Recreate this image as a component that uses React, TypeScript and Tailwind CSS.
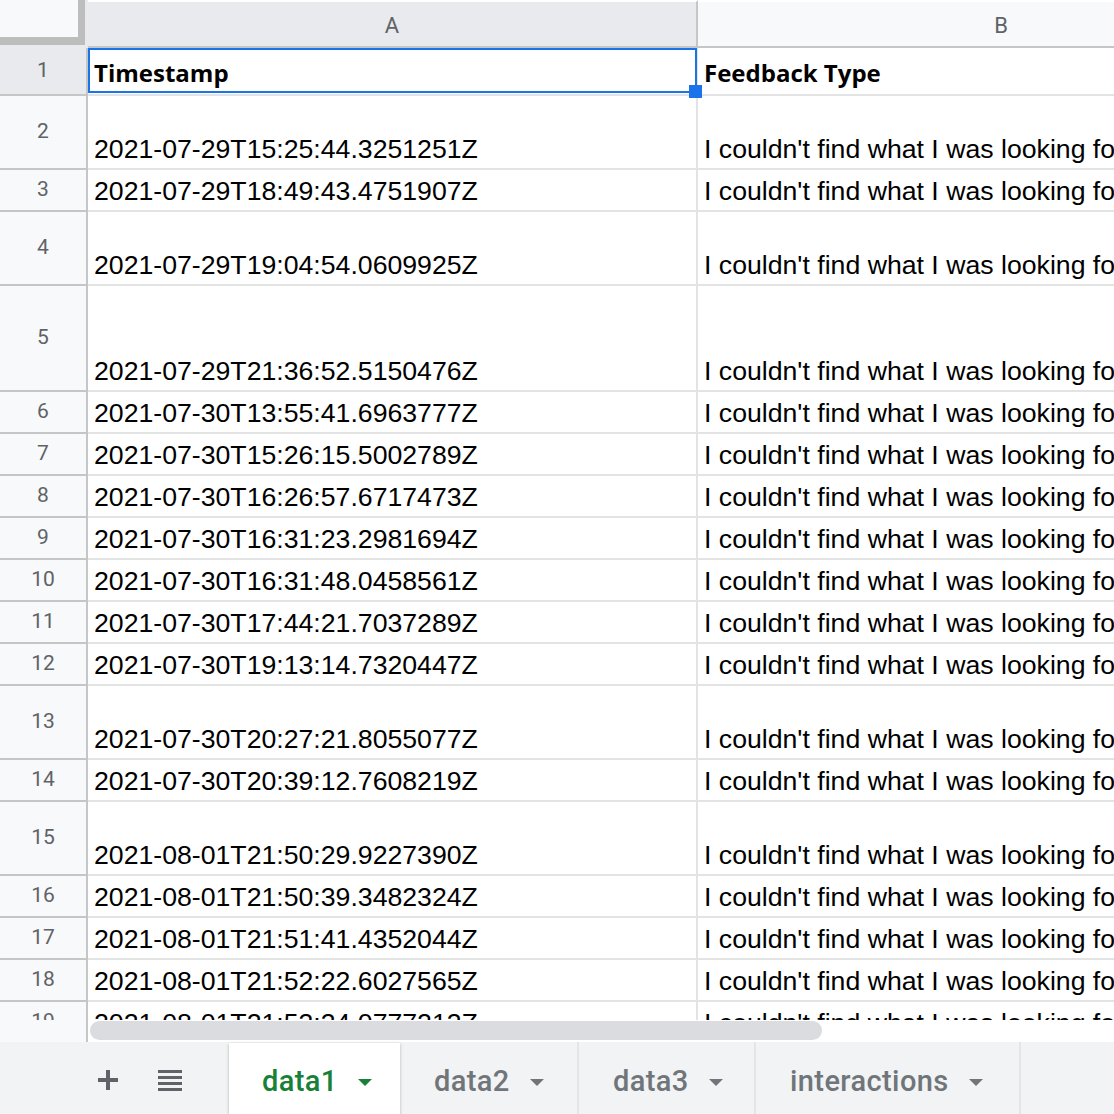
const feedback = "I couldn't find what I was looking for";

const rows = [
  { n: 2, t: '2021-07-29T15:25:44.3251251Z', h: 'h-[74px]' },
  { n: 3, t: '2021-07-29T18:49:43.4751907Z', h: 'h-[42px]' },
  { n: 4, t: '2021-07-29T19:04:54.0609925Z', h: 'h-[74px]' },
  { n: 5, t: '2021-07-29T21:36:52.5150476Z', h: 'h-[106px]' },
  { n: 6, t: '2021-07-30T13:55:41.6963777Z', h: 'h-[42px]' },
  { n: 7, t: '2021-07-30T15:26:15.5002789Z', h: 'h-[42px]' },
  { n: 8, t: '2021-07-30T16:26:57.6717473Z', h: 'h-[42px]' },
  { n: 9, t: '2021-07-30T16:31:23.2981694Z', h: 'h-[42px]' },
  { n: 10, t: '2021-07-30T16:31:48.0458561Z', h: 'h-[42px]' },
  { n: 11, t: '2021-07-30T17:44:21.7037289Z', h: 'h-[42px]' },
  { n: 12, t: '2021-07-30T19:13:14.7320447Z', h: 'h-[42px]' },
  { n: 13, t: '2021-07-30T20:27:21.8055077Z', h: 'h-[74px]' },
  { n: 14, t: '2021-07-30T20:39:12.7608219Z', h: 'h-[42px]' },
  { n: 15, t: '2021-08-01T21:50:29.9227390Z', h: 'h-[74px]' },
  { n: 16, t: '2021-08-01T21:50:39.3482324Z', h: 'h-[42px]' },
  { n: 17, t: '2021-08-01T21:51:41.4352044Z', h: 'h-[42px]' },
  { n: 18, t: '2021-08-01T21:52:22.6027565Z', h: 'h-[42px]' },
  { n: 19, t: '2021-08-01T21:53:34.0777213Z', h: 'h-[42px]' },
];

const tabs = [
  { name: 'data2', w: 'w-[179px]' },
  { name: 'data3', w: 'w-[177px]' },
  { name: 'interactions', w: 'w-[265px]' },
];

function Arrow({ color }: { color: string }) {
  return (
    <svg width="14" height="7" viewBox="0 0 14 7">
      <polygon points="0,0 14,0 7,7" fill={color} />
    </svg>
  );
}

export default function App() {
  return (
    <div className="w-[1114px] h-[1114px] overflow-hidden bg-white flex flex-col">
      <div className="h-[1020px] shrink-0 overflow-hidden flex flex-col">
        {/* column headers */}
        <div className="flex h-[48px] shrink-0 font-['Roboto',sans-serif] text-[22px] text-[#5f6368]">
          <div className="w-[88px] shrink-0 h-full bg-[#e8eaed]">
            <div className="w-[85px] h-[45px] bg-[#f8f9fa] border-r-[7px] border-b-[8px] border-[#bdbdbd]" />
          </div>
          <div className="w-[610px] shrink-0 bg-[#e8eaed] border-t-2 border-t-white border-r-2 border-r-[#c4c7c5] border-b-2 border-b-[#c4c7c5] flex items-center justify-center pt-[2px]">
            A
          </div>
          <div className="w-[606px] shrink-0 bg-[#f8f9fa] border-t-2 border-t-white border-b-2 border-b-[#c4c7c5] flex items-center justify-center pt-[2px]">
            B
          </div>
        </div>

        {/* row 1 */}
        <div className="relative flex h-[48px] shrink-0">
          <div className="w-[88px] shrink-0 bg-[#e8eaed] border-r-2 border-b-2 border-[#c4c7c5] flex items-center justify-center font-['Roboto',sans-serif] text-[21px] text-[#5f6368]">
            1
          </div>
          <div className="w-[610px] shrink-0 border-r-2 border-b-2 border-[#e2e3e3] flex items-end pl-[6px] pb-[5px] font-['Open_Sans',sans-serif] font-bold text-[24px] leading-[32px] text-black whitespace-nowrap overflow-hidden">
            Timestamp
          </div>
          <div className="w-[606px] shrink-0 border-b-2 border-[#e2e3e3] flex items-end pl-[6px] pb-[5px] font-['Open_Sans',sans-serif] font-bold text-[24px] leading-[32px] text-black whitespace-nowrap overflow-hidden">
            Feedback Type
          </div>
          <div className="absolute left-[88px] top-0 w-[609px] h-[45px] border-2 border-[#1a73e8]" />
          <div className="absolute z-10 left-[689px] top-[37px] w-[13px] h-[13px] bg-[#1a73e8]" />
        </div>

        {rows.map((r) => (
          <div key={r.n} className={`flex shrink-0 ${r.h}`}>
            <div className="w-[88px] shrink-0 bg-[#f8f9fa] border-r-2 border-b-2 border-[#c4c7c5] flex items-center justify-center font-['Roboto',sans-serif] text-[21px] text-[#5f6368]">
              {r.n}
            </div>
            <div className="w-[610px] shrink-0 border-r-2 border-b-2 border-[#e2e3e3] flex items-end pl-[6px] pb-[4px] font-['Liberation_Sans',Arial,sans-serif] text-[26.67px] leading-[30px] text-black whitespace-nowrap overflow-hidden">
              {r.t}
            </div>
            <div className="w-[606px] shrink-0 border-b-2 border-[#e2e3e3] flex items-end pl-[6px] pb-[4px] font-['Liberation_Sans',Arial,sans-serif] text-[26.67px] leading-[30px] text-black whitespace-nowrap overflow-hidden">
              {feedback}
            </div>
          </div>
        ))}
      </div>

      {/* horizontal scrollbar */}
      <div className="flex h-[22px] shrink-0">
        <div className="w-[88px] shrink-0 bg-[#f8f9fa] border-r-2 border-[#c4c7c5]" />
        <div className="flex-1 bg-white pl-[2px] pt-[1px]">
          <div className="w-[732px] h-[19px] rounded-full bg-[#dadce0]" />
        </div>
      </div>

      {/* sheet tabs */}
      <div className="flex h-[72px] shrink-0 bg-[#f1f3f4] font-['Roboto',sans-serif] font-medium text-[29px] tracking-[0.4px]">
        <div className="w-[229px] shrink-0 flex items-center pl-[98px] gap-[40px] pt-[4px]">
          <svg width="20" height="20" viewBox="0 0 20 20">
            <path d="M10 0v20M0 10h20" stroke="#5f6368" strokeWidth="4" />
          </svg>
          <svg width="24" height="21" viewBox="0 0 24 21">
            <rect x="0" y="0" width="24" height="3" fill="#5f6368" />
            <rect x="0" y="6" width="24" height="3" fill="#5f6368" />
            <rect x="0" y="12" width="24" height="3" fill="#5f6368" />
            <rect x="0" y="18" width="24" height="3" fill="#5f6368" />
          </svg>
        </div>
        <div className="w-[171px] shrink-0 mt-[1px] bg-white shadow-[0_1px_3px_rgba(60,64,67,0.35)] flex items-center pl-[33px] gap-[20px] pt-[7px] text-[#188038]">
          <span>data1</span>
          <Arrow color="#188038" />
        </div>
        {tabs.map((t) => (
          <div key={t.name} className={`${t.w} shrink-0 border-r-2 border-[#e3e5e7] flex items-center pl-[34px] gap-[20px] pt-[8px] text-[#70757a]`}>
            <span>{t.name}</span>
            <Arrow color="#70757a" />
          </div>
        ))}
      </div>
    </div>
  );
}
